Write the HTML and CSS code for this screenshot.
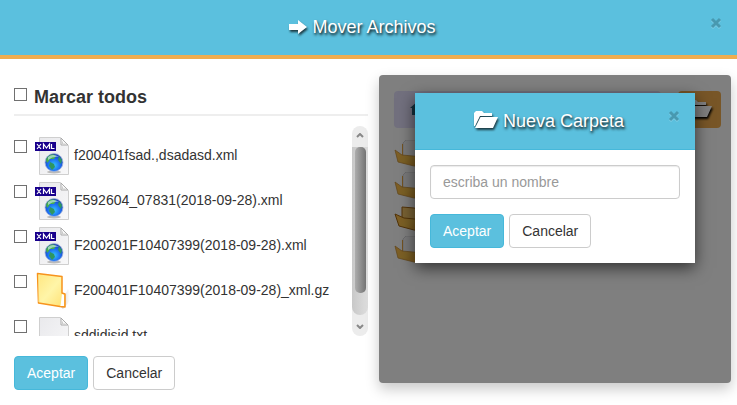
FILE: index.html
```html
<!DOCTYPE html>
<html lang="es">
<head>
<meta charset="utf-8">
<title>Mover Archivos</title>
<link rel="stylesheet" href="styles.css">
</head>
<body>
<svg class="defs" aria-hidden="true">
  <defs>
    <linearGradient id="paper" x1="0" y1="0" x2="1" y2="1"><stop offset="0" stop-color="#e9e9ec"/><stop offset="1" stop-color="#f8f8f9"/></linearGradient>
    <radialGradient id="sea" cx=".5" cy=".65" r=".6"><stop offset="0" stop-color="#35c3ff"/><stop offset=".6" stop-color="#1b6bf0"/><stop offset="1" stop-color="#1a3fb4"/></radialGradient>
    <linearGradient id="manila" x1="0" y1="0" x2="1" y2="1"><stop offset="0" stop-color="#ffe680"/><stop offset=".5" stop-color="#fff5a8"/><stop offset="1" stop-color="#ffdf70"/></linearGradient>
    <linearGradient id="shade"><stop offset="0" stop-color="#999" stop-opacity=".7"/><stop offset="1" stop-color="#ccc" stop-opacity="0"/></linearGradient>
    <linearGradient id="gold" x1="0" y1="0" x2="1" y2="1"><stop offset="0" stop-color="#ffbd4a"/><stop offset=".5" stop-color="#f5c04a"/><stop offset="1" stop-color="#e8a030"/></linearGradient>
    <symbol id="page" viewBox="0 0 36 40">
      <path d="M5.500 1.500H26.500L34.500 9.500V38.500H5.500Z" fill="url(#paper)" stroke="#cfcfcf"/>
      <path d="M27 2V9H34Z" fill="#fafafa" stroke="#aaa"/>
      <path d="M28.500 5.500V8H31.500" fill="none" stroke="#ccc"/>
    </symbol>
    <symbol id="xml" viewBox="0 0 36 40">
      <use href="#page"/>
      <ellipse cx="20" cy="36" rx="7" ry="1.500" fill="#bbb"/>
      <circle cx="20" cy="26.500" r="9" fill="url(#sea)" stroke="#a5b5dc" stroke-width=".8"/>
      <path d="M12 24C13 20 17 18 20 18.500L22 20 20 23 16 23 15 25 13 27Z" fill="#47ad4d"/>
      <path d="M16 26L20 28 21 31 18 34 15 30ZM25 20L28 24 27 28 24 24Z" fill="#2f9661"/>
      <path d="M14 21Q19 17 25 21Q19 20 14 24Z" fill="#d6efff" opacity=".6"/>
      <rect x="1" y="6" width="21" height="9" fill="#18008c"/>
      <path d="M3 8L7 13M7 8L3 13M9.500 13V8L12.500 12L15.500 8V13M17.500 8V12.500H20.500" fill="none" stroke="#fff" stroke-width="1.200"/>
    </symbol>
    <symbol id="folder" viewBox="0 0 36 40">
      <path d="M26 35L34 18Q38 24 35 31L29 38Z" fill="url(#shade)"/>
      <path d="M3.500 2.500L28 5.500V22L31 23V36L26 35.500 4.500 32Z" fill="url(#manila)" stroke="#f7931d" stroke-width="1.500" stroke-linejoin="round"/>
      <path d="M28 23L30 24V35H26.500Z" fill="#fff"/>
      <path d="M5 3.500V31" stroke="#fff09a"/>
    </symbol>
    <symbol id="node" viewBox="0 0 32 32">
      <path d="M9 3L12 0H26L29 3V23H9Z" fill="#f4f4f6" stroke="#d4d4d8"/>
      <path d="M8.500 4V19" stroke="#e4a544"/>
      <path d="M1 10L8 15 30 17 28 26 20 26 4 22Z" fill="url(#gold)" stroke="#c8923c" stroke-width=".8"/>
    </symbol>
    <symbol id="node-open" viewBox="0 0 32 32">
      <path d="M8 3L20 4 30 7V20L8 16Z" fill="#f1c367" stroke="#a46612"/>
      <path d="M1 10L10 14 31 16 28 27 20 26 5 22Z" fill="url(#gold)" stroke="#a46612"/>
    </symbol>
    <symbol id="open" viewBox="0 0 24 18">
      <path d="M0 15V2L2 0H8L10 2H18V5H6L1 15Z" fill="#fff"/>
      <path d="M6.500 6H24L19 17H1Z" fill="#fff"/>
    </symbol>
    <symbol id="cross" viewBox="0 0 12 12">
      <path d="M2 3L10 11M10 3L2 11" stroke="#fff" stroke-width="3"/>
      <path d="M2 2L10 10M10 2L2 10" stroke="#000" stroke-width="3"/>
    </symbol>
  </defs>
</svg>

<header class="top">
  <button class="close" type="button" aria-label="Cerrar"><svg class="cross" aria-hidden="true"><use href="#cross"/></svg></button>
  <h1 class="title"><svg class="arrow" viewBox="0 0 18 14" aria-hidden="true"><path d="M0 4H9V0L18 7 9 14V10H0Z" fill="#fff"/></svg> Mover Archivos</h1>
</header>

<main class="content">
  <section class="files">
    <label class="all"><input class="check" type="checkbox">Marcar todos</label>
    <div class="scroller">
      <ul class="list">
        <li><label class="file"><input class="check" type="checkbox"><svg class="icon"><use href="#xml"/></svg>f200401fsad.,dsadasd.xml</label></li>
        <li><label class="file"><input class="check" type="checkbox"><svg class="icon"><use href="#xml"/></svg>F592604_07831(2018-09-28).xml</label></li>
        <li><label class="file"><input class="check" type="checkbox"><svg class="icon"><use href="#xml"/></svg>F200201F10407399(2018-09-28).xml</label></li>
        <li><label class="file"><input class="check" type="checkbox"><svg class="icon"><use href="#folder"/></svg>F200401F10407399(2018-09-28)_xml.gz</label></li>
        <li><label class="file"><input class="check" type="checkbox"><svg class="icon"><use href="#page"/></svg>sddidisid.txt</label></li>
      </ul>
      <div class="bar" aria-hidden="true">
        <svg class="chevron" viewBox="0 0 8 5"><path d="M1 4L4 1L7 4"/></svg>
        <div class="track"><div class="thumb"></div></div>
        <svg class="chevron" viewBox="0 0 8 5"><path d="M1 1L4 4L7 1"/></svg>
      </div>
    </div>
    <div class="actions">
      <button class="btn primary" type="button">Aceptar</button>
      <button class="btn" type="button">Cancelar</button>
    </div>
  </section>

  <section class="panel">
    <div class="tools">
      <div class="path"><svg class="home" viewBox="0 0 16 14" aria-hidden="true"><path d="M0 7L8 0 16 7H14V14H10V9H6V14H2V7Z" fill="#28647c"/></svg></div>
      <button class="new" type="button" aria-label="Nueva Carpeta"><svg class="open" aria-hidden="true"><use href="#open"/></svg></button>
    </div>
    <div class="tree">
      <svg class="node"><use href="#node"/></svg>
      <svg class="node"><use href="#node"/></svg>
      <svg class="node"><use href="#node-open"/></svg>
      <svg class="node"><use href="#node"/></svg>
    </div>
    <div class="overlay">
      <form class="dialog" role="dialog" aria-labelledby="new-title">
        <div class="dialog-head">
          <button class="close" type="button" aria-label="Cerrar"><svg class="cross" aria-hidden="true"><use href="#cross"/></svg></button>
          <h2 class="title" id="new-title"><svg class="open" aria-hidden="true"><use href="#open"/></svg> Nueva Carpeta</h2>
        </div>
        <div class="dialog-body">
          <input class="field" type="text" placeholder="escriba un nombre" aria-label="Nombre de la carpeta">
          <div class="actions">
            <button class="btn primary" type="button">Aceptar</button>
            <button class="btn" type="button">Cancelar</button>
          </div>
        </div>
      </form>
    </div>
  </section>
</main>
</body>
</html>
```
FILE: styles.css
```css
* { box-sizing: border-box; }

body {
  margin: 0;
  background: #fff;
  color: #333;
  font: 14px/20px "Liberation Sans", Arial, sans-serif;
}

.defs { position: absolute; width: 0; height: 0; }

.top {
  padding: 15px;
  background: #5bc0de;
  border-bottom: 4px solid #f0ad4e;
}

.title {
  margin: 0;
  color: #fff;
  font-size: 18px;
  font-weight: 400;
  line-height: 25px;
  text-align: center;
  text-shadow: 1px 2px 3px #000;
}

.title svg { filter: drop-shadow(1px 2px 1px rgba(0, 0, 0, 0.7)); }

.arrow { width: 18px; height: 14px; vertical-align: -1px; }

.open { width: 24px; height: 18px; vertical-align: -2px; }

.close {
  float: right;
  padding: 2px 0 0;
  border: 0;
  background: none;
  opacity: 0.2;
}

.cross { display: block; width: 12px; height: 12px; }

.content {
  display: grid;
  grid-template-columns: 354fr 352fr;
  gap: 11px;
  padding: 16px 6px 15px 14px;
}

.all {
  display: flex;
  gap: 7px;
  padding: 12px 0 6px;
  border-bottom: 2px solid #eee;
  font-size: 18px;
  font-weight: 700;
  line-height: 21px;
}

.check {
  appearance: none;
  flex: none;
  width: 13px;
  height: 13px;
  margin: 1px 0 0;
  border: 1px solid #707070;
  background: #fff;
}

.scroller {
  display: flex;
  justify-content: space-between;
  height: 210px;
  margin: 10px 0 20px;
}

.list {
  flex: 1;
  margin: 0;
  padding: 10px 0 0;
  overflow: hidden;
  list-style: none;
}

.file {
  display: flex;
  height: 45px;
  line-height: 38px;
}

.file .check { margin-top: 4px; }

.icon { flex: none; width: 36px; height: 40px; margin: 0 4px 0 7px; }

.bar {
  display: flex;
  flex-direction: column;
  align-items: center;
  width: 16px;
  padding: 7px 0;
  gap: 9px;
  border-radius: 8px;
  background: #ececec;
}

.chevron { width: 8px; height: 5px; fill: none; stroke: #888; stroke-width: 2; }

.track {
  flex: 1;
  width: 16px;
  padding: 0 2px 22px 3px;
  border-radius: 0 0 8px 8px;
  background: linear-gradient(90deg, #c8c8c8, #dedede);
}

.thumb {
  height: 100%;
  border-radius: 5px;
  background: linear-gradient(90deg, #adadad, #747474);
}

.actions { display: flex; gap: 5px; }

.btn {
  height: 34px;
  padding: 6px 12px;
  border: 1px solid #ccc;
  border-radius: 4px;
  background: #fff;
  color: #333;
  font: inherit;
}

.primary { border-color: #46b8da; background: #5bc0de; color: #fff; }

.panel {
  position: relative;
  min-height: 308px;
  align-self: start;
  padding: 16px 10px 15px 15px;
  border-radius: 4px;
  box-shadow: 0 6px 14px rgba(0, 0, 0, 0.22);
}

.tools { display: flex; gap: 17px; }

.path {
  flex: 1;
  height: 37px;
  padding: 9px 16px;
  border-radius: 4px;
  background: #e4e1fc;
}

.home { width: 16px; height: 14px; }

.new {
  width: 43px;
  padding: 0;
  border: 0;
  border-radius: 4px;
  background: #f0ad4e;
}

.new .open { filter: drop-shadow(1px 2px 1px #000); }

.tree { display: flex; flex-direction: column; padding-top: 12px; }

.node { width: 32px; height: 32px; }

.overlay {
  position: absolute;
  inset: 0;
  padding: 18px 36px;
  border-radius: 4px;
  background: rgba(0, 0, 0, 0.5);
}

.dialog { background: #fff; box-shadow: 0 5px 15px rgba(0, 0, 0, 0.6); }

.dialog-head {
  padding: 15px;
  background: #5bc0de;
  border-bottom: 1px solid #46b8da;
}

.dialog-head .title { line-height: 26px; }

.dialog-body { padding: 15px; }

.field {
  display: block;
  width: 100%;
  height: 34px;
  margin: 0 0 15px;
  padding: 6px 12px;
  border: 1px solid #ccc;
  border-radius: 4px;
  box-shadow: inset 0 1px 1px rgba(0, 0, 0, 0.08);
  font: inherit;
}

.field::placeholder { color: #999; }
```
